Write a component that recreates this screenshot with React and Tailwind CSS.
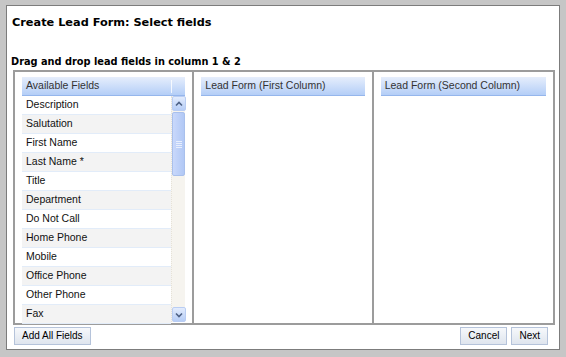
import React from 'react';

const fields = [
    'Description',
    'Salutation',
    'First Name',
    'Last Name *',
    'Title',
    'Department',
    'Do Not Call',
    'Home Phone',
    'Mobile',
    'Office Phone',
    'Other Phone',
    'Fax',
];

const ColumnHeader = ({ label, divider }) => (
    <div className="relative h-[19px] flex items-center pl-[4px] bg-gradient-to-b from-[#e6eefc] to-[#b4cef7] border-b border-[#95b6ec] text-[10.5px] text-[#333]">
        {label}
        {divider && <div className="absolute right-[13px] top-[3px] h-[13px] w-px bg-white/80" />}
    </div>
);

const ScrollButton = ({ down }) => (
    <div className="h-[15px] w-[14px] flex items-center justify-center rounded-[2px] border border-[#b9cdf3] bg-gradient-to-b from-[#e3ecfd] to-[#b6cdf6]">
        <svg width="8" height="6" viewBox="0 0 8 6">
            <path d={down ? 'M1 1.5 L4 4.5 L7 1.5' : 'M1 4.5 L4 1.5 L7 4.5'} fill="none" stroke="#4d6185" strokeWidth="1.6" />
        </svg>
    </div>
);

const Button = ({ children, className = '' }) => (
    <button className={`h-[18px] px-[7px] border border-[#b5c3da] bg-gradient-to-b from-[#f6f8fb] to-[#dfe5ee] text-[10px] text-black leading-none ${className}`}>
        {children}
    </button>
);

export default function App() {
    return (
        <div className="w-[566px] h-[357px] bg-[#c6c6c6] pl-[6px] pt-[5px] pr-[6px] pb-[7px]" style={{ fontFamily: '"Liberation Sans", Arial, sans-serif' }}>
            <div className="h-full border border-[#7c7c7c] bg-white flex flex-col">
                {/* title */}
                <div className="pt-[9px] pl-[5px] h-[16px] text-[11.3px] leading-[16px] font-bold text-black" style={{ fontFamily: '"DejaVu Sans", Verdana, sans-serif' }}>
                    Create Lead Form: Select fields
                </div>
                <div className="mt-[33px] pl-[4px] text-[9.8px] leading-[14px] font-bold text-black" style={{ fontFamily: '"DejaVu Sans", Verdana, sans-serif' }}>
                    Drag and drop lead fields in column 1 &amp; 2
                </div>

                {/* columns */}
                <div className="ml-[6px] w-[542px] h-[255px] mt-[1px] border-2 border-[#9c9c9c] grid grid-cols-3">
                    {/* available fields */}
                    <div className="border-r-2 border-[#9c9c9c] px-[7px] pt-[5px]">
                        <ColumnHeader label="Available Fields" divider />
                        <div className="flex">
                            <div className="flex-1 flex flex-col">
                                {fields.map((f, i) => (
                                    <div key={f} className={`h-[19px] flex items-center pl-[4px] text-[10.5px] text-[#111] border-b border-[#e2ecf9] ${i % 2 ? 'bg-[#f3f3f3]' : 'bg-white'}`}>
                                        {f}
                                    </div>
                                ))}
                            </div>
                            {/* scrollbar */}
                            <div className="w-[14px] h-[226px] flex flex-col bg-[#f6f4ef] border-l border-dotted border-[#e6e2d8]">
                                <ScrollButton />
                                <div className="mt-[1px] h-[64px] rounded-[2px] border border-[#a9c0ec] bg-gradient-to-r from-[#c9d8fb] to-[#b1c8f5] flex items-center justify-center">
                                    <div className="w-[6px] flex flex-col gap-[1px]">
                                        <div className="h-px bg-[#e8effd]" />
                                        <div className="h-px bg-[#e8effd]" />
                                        <div className="h-px bg-[#e8effd]" />
                                        <div className="h-px bg-[#e8effd]" />
                                    </div>
                                </div>
                                <div className="flex-1" />
                                <ScrollButton down />
                            </div>
                        </div>
                    </div>

                    {/* first column */}
                    <div className="border-r-2 border-[#9c9c9c] px-[7px] pt-[5px]">
                        <ColumnHeader label="Lead Form (First Column)" />
                    </div>

                    {/* second column */}
                    <div className="px-[7px] pt-[5px]">
                        <ColumnHeader label="Lead Form (Second Column)" />
                    </div>
                </div>

                {/* buttons */}
                <div className="mt-[2px] ml-[7px] mr-[11px] flex items-center">
                    <Button>Add All Fields</Button>
                    <div className="flex-1" />
                    <Button className="mr-[4px]">Cancel</Button>
                    <Button>Next</Button>
                </div>
            </div>
        </div>
    );
}
